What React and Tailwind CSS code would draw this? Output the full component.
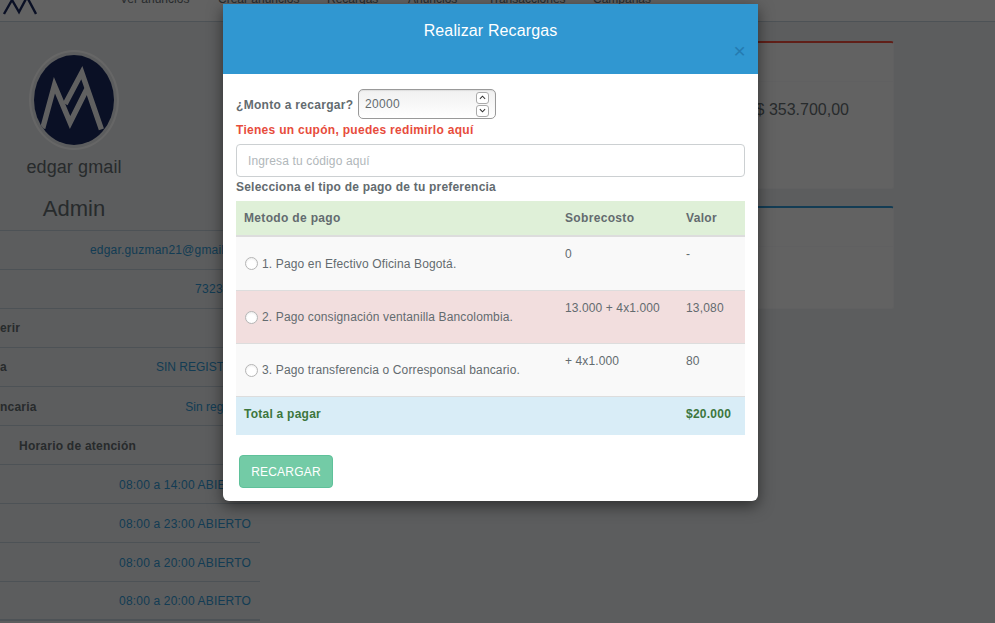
const font = { fontFamily: '"Liberation Sans", Arial, sans-serif' };

const navItems = [
  ['Ver anuncios', 'w-[98px]'],
  ['Crear anuncios', 'w-[109px]'],
  ['Recargas', 'w-[81px]'],
  ['Anuncios', 'w-[80px]'],
  ['Transacciones', 'w-[105px]'],
  ['Campañas', 'w-[80px]'],
];

const sideRows = [
  { value: 'edgar.guzman21@gmail.com', valueClass: 'mr-[9px] tracking-[0.2px]' },
  { value: '73231234', valueClass: 'mr-[9px] tracking-[0.33px]' },
  { label: 'erir' },
  { label: 'a', value: 'SIN REGISTRO', valueClass: 'mr-[18px]' },
  { label: 'ncaria', value: 'Sin registro', valueClass: 'mr-[14px]', rowClass: 'pt-[1px]' },
];

const hours = ['08:00 a 14:00 ABIERTO', '08:00 a 23:00 ABIERTO', '08:00 a 20:00 ABIERTO', '08:00 a 20:00 ABIERTO'];

const pagos = [
  { metodo: '1. Pago en Efectivo Oficina Bogotá.', sobre: '0', valor: '-', bg: 'bg-[#f9f9f9] h-[54px]' },
  { metodo: '2. Pago consignación ventanilla Bancolombia.', sobre: '13.000 + 4x1.000', valor: '13,080', bg: 'bg-[#f2dede] h-[53px]' },
  { metodo: '3. Pago transferencia o Corresponsal bancario.', sobre: '+ 4x1.000', valor: '80', bg: 'bg-[#f9f9f9] h-[53px]' },
];

function Avatar() {
  return (
    <div className="w-[90px] h-[100px] rounded-[50%] border-2 border-white p-[3px]">
      <div className="w-full h-full rounded-[50%] bg-[#1b2a5e] overflow-hidden">
        <svg viewBox="0 0 80 92" className="w-full h-full">
          <path d="M8 75 L20 31 L36 69 L53 35" fill="none" stroke="#f0f0f0" strokeWidth="5.5" />
          <path d="M31 50 L48 18 L68 76" fill="none" stroke="#f0f0f0" strokeWidth="5.5" />
        </svg>
      </div>
    </div>
  );
}

function Card({ borderColor, height, children }) {
  return (
    <div className={`bg-[#f6f6f6] rounded-[3px] border border-[#f0f1f2] border-t-2 ${borderColor} ${height} flex flex-col`}>
      <div className="h-[39px] shrink-0 border-b border-[#f0f1f2]" />
      {children}
    </div>
  );
}

export default function App() {
  return (
    <div className="relative h-screen overflow-hidden bg-[#e6e8ea] text-[12px] text-[#636b6f]" style={font}>
      <nav className="h-[22px] bg-[#f4f4f4] border-b border-[#c0ced8] flex overflow-hidden">
        <svg viewBox="0 0 36 15" className="w-[36px] h-[15px] ml-[1px] shrink-0 text-[#1b2a5e]">
          <path d="M3 14 L11 0 L18 12 L26 -3 L35 14" fill="none" stroke="currentColor" strokeWidth="2.4" />
        </svg>
        <div className="flex ml-[83px] -mt-[11px]">
          {navItems.map(([label, width]) => (
            <span key={label} className={`${width} leading-[20px] shrink-0`}>{label}</span>
          ))}
        </div>
      </nav>

      <div className="flex">
        <aside className="w-[260px] shrink-0">
          <div className="w-[148px] h-[208px] pt-[28px] flex flex-col items-center">
            <Avatar />
            <div className="text-[18px] leading-[25px] mt-[5px] tracking-[0.1px]">edgar gmail</div>
            <div className="text-[22px] leading-[30px] mt-[14px]">Admin</div>
          </div>
          <div className="border-t border-[#c0ced8]">
            {sideRows.map(row => (
              <div key={row.value || row.label} className={`h-[39px] border-b border-[#c0ced8] flex items-center justify-between ${row.rowClass || ''}`}>
                <b className="tracking-[0.2px]">{row.label}</b>
                <span className={`text-[#3097d1] ${row.valueClass}`}>{row.value}</span>
              </div>
            ))}
            <div className="h-[39px] pt-[1px] border-b border-[#c0ced8] flex items-center pl-[19px]">
              <b className="tracking-[0.23px]">Horario de atención</b>
            </div>
            {hours.map((h, i) => (
              <div key={i} className="h-[39px] pt-[1px] border-b border-[#c0ced8] last:border-b-2 flex items-center justify-end pr-[9px]">
                <span className="text-[#3097d1] tracking-[0.17px]">{h}</span>
              </div>
            ))}
          </div>
        </aside>

        <main className="flex-1 pl-[15px] pr-[101px] pt-[19px] flex flex-col gap-[17px]">
          <Card borderColor="border-t-[#ef4e3c]" height="h-[148px]">
            <div className="pt-[17px] flex justify-end pr-[44px] text-[16px] leading-[22px]">
              $ 353.700,00
            </div>
          </Card>
          <Card borderColor="border-t-[#3097d1]" height="h-[103px]" />
        </main>
      </div>

      <div className="absolute inset-0 bg-black/60">
        <div className="ml-[223px] mt-[4px] w-[535px] h-[497px] bg-white rounded-b-[6px] shadow-[0_5px_15px_rgba(0,0,0,0.5)] flex flex-col">
          <header className="relative h-[70px] shrink-0 bg-[#3097d1] text-white text-center pt-[16px] text-[16px] leading-[22px] tracking-[0.12px]">
            Realizar Recargas
            <span className="absolute right-[12px] top-[36px] text-[#1f6fa3] opacity-70 text-[21px] leading-[21px]">×</span>
          </header>

          <div className="px-[13px] flex-1">
            <div className="flex items-center h-[30px] mt-[15px]">
              <b className="w-[122px] pt-[1px] tracking-[0.3px]">¿Monto a recargar?</b>
              <div className="w-[138px] h-[30px] rounded-[5px] border border-[#999] bg-gradient-to-b from-[#f0f0f0] to-white pl-[6px] pr-[6px] flex items-center justify-between shadow-[inset_0_1px_1px_rgba(0,0,0,0.08)]">
                <span className="tracking-[0.33px]">20000</span>
                <div className="flex flex-col gap-[1px]">
                  <span className="w-[13px] h-[12px] rounded-[3px] border border-[#aaa] bg-white flex items-center justify-center">
                    <svg viewBox="0 0 8 5" className="w-[7px] h-[5px]"><path d="M1 4 L4 1 L7 4" fill="none" stroke="#333" strokeWidth="1.2" /></svg>
                  </span>
                  <span className="w-[13px] h-[12px] rounded-[3px] border border-[#aaa] bg-white flex items-center justify-center">
                    <svg viewBox="0 0 8 5" className="w-[7px] h-[5px]"><path d="M1 1 L4 4 L7 1" fill="none" stroke="#333" strokeWidth="1.2" /></svg>
                  </span>
                </div>
              </div>
            </div>
            <b className="block mt-[1px] leading-[20px] text-[#e74c3c] tracking-[0.29px]">Tienes un cupón, puedes redimirlo aquí</b>
            <input
              className="block w-[509px] h-[33px] mt-[4px] px-[11px] rounded-[4px] border border-[#ccd0d2] text-[12px] tracking-[0.14px] placeholder:text-[#b1b7ba] outline-none"
              style={font}
              placeholder="Ingresa tu código aquí"
            />
            <b className="block leading-[20px] tracking-[0.21px]">Selecciona el tipo de pago de tu preferencia</b>

            <table className="w-[509px] mt-[4px] table-fixed border-collapse">
              <colgroup>
                <col className="w-[321px]" />
                <col className="w-[121px]" />
                <col className="w-[67px]" />
              </colgroup>
              <thead>
                <tr className="bg-[#dff0d8] h-[35px] border-b-2 border-[#ddd] tracking-[0.33px]">
                  <th className="text-left font-bold px-[8px]">Metodo de pago</th>
                  <th className="text-left font-bold px-[8px]">Sobrecosto</th>
                  <th className="text-left font-bold px-[8px]">Valor</th>
                </tr>
              </thead>
              <tbody>
                {pagos.map(p => (
                  <tr key={p.metodo} className={`${p.bg} border-b border-[#ddd]`}>
                    <td className="px-[8px] pt-[1px] align-middle">
                      <label className="flex items-center tracking-[0.14px]">
                        <span className="w-[13px] h-[13px] mx-[1px] rounded-full border border-[#b5b5b5] bg-white shadow-[inset_0_1px_2px_rgba(0,0,0,0.08)]" />
                        <span className="ml-[3px]">{p.metodo}</span>
                      </label>
                    </td>
                    <td className="px-[8px] pt-[7px] align-top leading-[20px] tracking-[0.11px]">{p.sobre}</td>
                    <td className="px-[8px] pt-[7px] align-top leading-[20px] tracking-[0.18px]">{p.valor}</td>
                  </tr>
                ))}
                <tr className="bg-[#d9edf7] h-[39px] text-[#3c763d] font-bold tracking-[0.25px]">
                  <td className="px-[8px] pb-[4px]">Total a pagar</td>
                  <td />
                  <td className="px-[8px] pb-[4px]">$20.000</td>
                </tr>
              </tbody>
            </table>

            <button className="block mt-[20px] ml-[3px] w-[94px] h-[33px] rounded-[4px] bg-[#73cba6] border border-[#5fc19a] text-white text-[12px] tracking-[0.2px]" style={font}>
              RECARGAR
            </button>
          </div>
        </div>
      </div>
    </div>
  );
}
